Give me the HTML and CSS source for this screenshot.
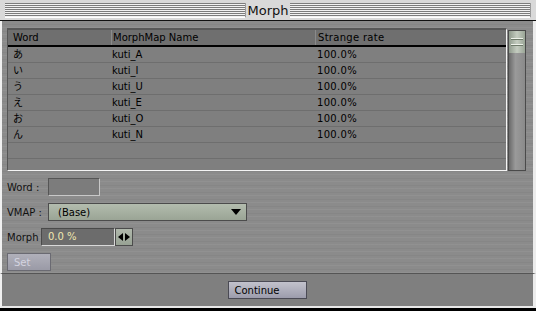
FILE: index.html
```html
<!DOCTYPE html>
<html lang="ja">
<head>
    <meta charset="UTF-8">
    <title>Morph</title>
    <link rel="stylesheet" href="styles.css">
</head>
<body>
    <div class="window">
        <!-- barra de título -->
        <div class="titlebar">
            <div class="stripes"></div>
            <div class="title">Morph</div>
            <div class="stripes"></div>
        </div>

        <div class="content">
            <div class="list-wrap">
                <div class="list">
                    <div class="row head">
                        <span class="c1">Word</span>
                        <span class="c2">MorphMap Name</span>
                        <span class="c3">Strange rate</span>
                    </div>
                    <div class="row"><span class="c1">あ</span><span class="c2">kuti_A</span><span class="c3">100.0%</span></div>
                    <div class="row"><span class="c1">い</span><span class="c2">kuti_I</span><span class="c3">100.0%</span></div>
                    <div class="row"><span class="c1">う</span><span class="c2">kuti_U</span><span class="c3">100.0%</span></div>
                    <div class="row"><span class="c1">え</span><span class="c2">kuti_E</span><span class="c3">100.0%</span></div>
                    <div class="row"><span class="c1">お</span><span class="c2">kuti_O</span><span class="c3">100.0%</span></div>
                    <div class="row"><span class="c1">ん</span><span class="c2">kuti_N</span><span class="c3">100.0%</span></div>
                    <div class="row"></div>
                    <div class="row last"></div>
                </div>
                <div class="scrollbar">
                    <div class="thumb"><i></i><i></i></div>
                </div>
            </div>

            <div class="field">
                <span class="label">Word :</span>
                <div class="textbox"></div>
            </div>
            <div class="field">
                <span class="label">VMAP :</span>
                <div class="popup">
                    <span>(Base)</span>
                    <svg width="10" height="6" viewBox="0 0 10 6"><path d="M0 0h10L5 6z" fill="#000"/></svg>
                </div>
            </div>
            <div class="field">
                <span class="label morph">Morph</span>
                <div class="numbox">0.0 %</div>
                <div class="spin">
                    <svg width="12" height="8" viewBox="0 0 12 8"><path d="M0 4l5-4v8zM12 4l-5-4v8z" fill="#000"/></svg>
                </div>
            </div>
            <div class="field">
                <button class="btn set" disabled>Set</button>
            </div>
        </div>

        <div class="footer">
            <button class="btn continue">Continue</button>
        </div>
    </div>
</body>
</html>
```

FILE: styles.css
```css
/* ventana general */
body {
    margin: 0;
    width: 536px;
    height: 311px;
    background: #000;
    font-family: "DejaVu Sans", "Noto Sans CJK JP", sans-serif;
    font-size: 10px;
    color: #000;
    overflow: hidden;
}

.window {
    width: 536px;
    height: 308px;
    display: flex;
    flex-direction: column;
    background: #d6d6d6;
}

/* barra de título */
.titlebar {
    height: 21px;
    display: flex;
    align-items: center;
    padding: 0 5px 0 5px;
    background: #d9d9d9;
    border-bottom: 1px solid #111;
    box-sizing: border-box;
}

.stripes {
    flex: 1;
    height: 14px;
    background: repeating-linear-gradient(#7c7c7c 0 1px, #f2f2f2 1px 2px);
    border-right: 1px solid #999;
    border-bottom: 1px solid #fff;
}

.title {
    width: 44px;
    text-align: center;
    font-size: 13px;
    font-family: "DejaVu Sans", sans-serif;
    color: #111;
}

/* contenido */
.content {
    flex: 1;
    background:
        repeating-linear-gradient(0deg, rgba(255,255,255,0.05) 0 1px, transparent 1px 3px, rgba(0,0,0,0.04) 3px 4px, transparent 4px 7px),
        #8b8b8b;
    border-left: 2px solid #f0f0f0;
    border-right: 3px solid #ececec;
    padding: 7px 0 0 5px;
    display: flex;
    flex-direction: column;
    gap: 7px;
}

.list-wrap {
    display: flex;
    gap: 1px;
}

.list {
    width: 500px;
    height: 143px;
    background: #7f7f7f;
    border-top: 2px solid #585858;
    border-left: 1px solid #555;
    border-right: 1px solid #f4f4f4;
    border-bottom: 1px solid #f4f4f4;
    box-sizing: border-box;
    overflow: hidden;
}

.row {
    display: flex;
    height: 16px;
    line-height: 15px;
    border-bottom: 1px solid #6e6e6e;
    box-sizing: border-box;
}

.row span {
    box-sizing: border-box;
}

.row.head {
    height: 17px;
    background: #6f6f6f;
    border-bottom: 2px solid #000;
}

.row.head span {
    border-left: 1px solid #8a8a8a;
}

.row.head .c1 {
    border-left: none;
}

.c1 {
    width: 103px;
    padding-left: 5px;
}

.c2 {
    width: 204px;
    padding-left: 1px;
}

.c3 {
    flex: 1;
    padding-left: 2px;
}

.row .c3 {
    letter-spacing: 0.3px;
}

/* barra de desplazamiento */
.scrollbar {
    width: 18px;
    height: 141px;
    margin-top: 2px;
    border: 1px solid #4a4a4a;
    box-sizing: border-box;
    background: linear-gradient(90deg, #6a6a6a, #9a9a9a 40%, #8a8a8a);
}

.thumb {
    height: 22px;
    background: linear-gradient(90deg, #8f9a8c, #c4ccc0 50%, #9aa596);
    display: flex;
    flex-direction: column;
    align-items: center;
    justify-content: center;
    gap: 4px;
}

.thumb i {
    width: 12px;
    height: 1px;
    background: #eef2ea;
    border-bottom: 1px solid #6e7a6a;
}

/* campos */
.field {
    display: flex;
    align-items: center;
    height: 18px;
}

.label {
    width: 41px;
    color: #111;
}

.label.morph {
    width: 34px;
}

.textbox {
    width: 52px;
    height: 18px;
    background: #7c7c7c;
    border-top: 1px solid #555;
    border-left: 1px solid #555;
    border-right: 1px solid #c8c8c8;
    border-bottom: 1px solid #c8c8c8;
    box-sizing: border-box;
}

.popup {
    width: 199px;
    height: 18px;
    box-sizing: border-box;
    border: 1px solid #4c4c4c;
    background: linear-gradient(#b3bcae, #9aa495);
    display: flex;
    align-items: center;
    justify-content: space-between;
    padding: 0 5px 0 9px;
}

.numbox {
    width: 74px;
    height: 18px;
    box-sizing: border-box;
    background: #6c6c6c;
    border-top: 1px solid #4a4a4a;
    border-left: 1px solid #4a4a4a;
    border-right: 1px solid #d8d8d8;
    border-bottom: 1px solid #d8d8d8;
    color: #f0e8b0;
    padding-left: 6px;
    line-height: 16px;
}

.spin {
    width: 18px;
    height: 18px;
    box-sizing: border-box;
    border: 1px solid #4c4c4c;
    background: linear-gradient(#b0b8ac, #98a294);
    display: flex;
    align-items: center;
    justify-content: center;
}

/* botones */
.btn {
    font-family: "DejaVu Sans", sans-serif;
    font-size: 10px;
    height: 18px;
    box-sizing: border-box;
    border: 1px solid #4a4a54;
    background: linear-gradient(#c2c2cc, #9c9cac);
    padding: 0 0 0 6px;
    text-align: left;
    margin: 0;
}

.btn.set {
    width: 44px;
    color: #d4d4e0;
    background: linear-gradient(#b0b0ba, #9a9aa6);
    border-color: #6a6a72;
}

.footer {
    height: 32px;
    background: #7f7f7f;
    border-top: 1px solid #555;
    border-left: 2px solid #f0f0f0;
    border-right: 3px solid #ececec;
    border-bottom: 2px solid #e8e8e8;
    display: flex;
    justify-content: center;
    align-items: center;
}

.btn.continue {
    width: 79px;
    color: #000;
    margin-left: -1px;
}
```
